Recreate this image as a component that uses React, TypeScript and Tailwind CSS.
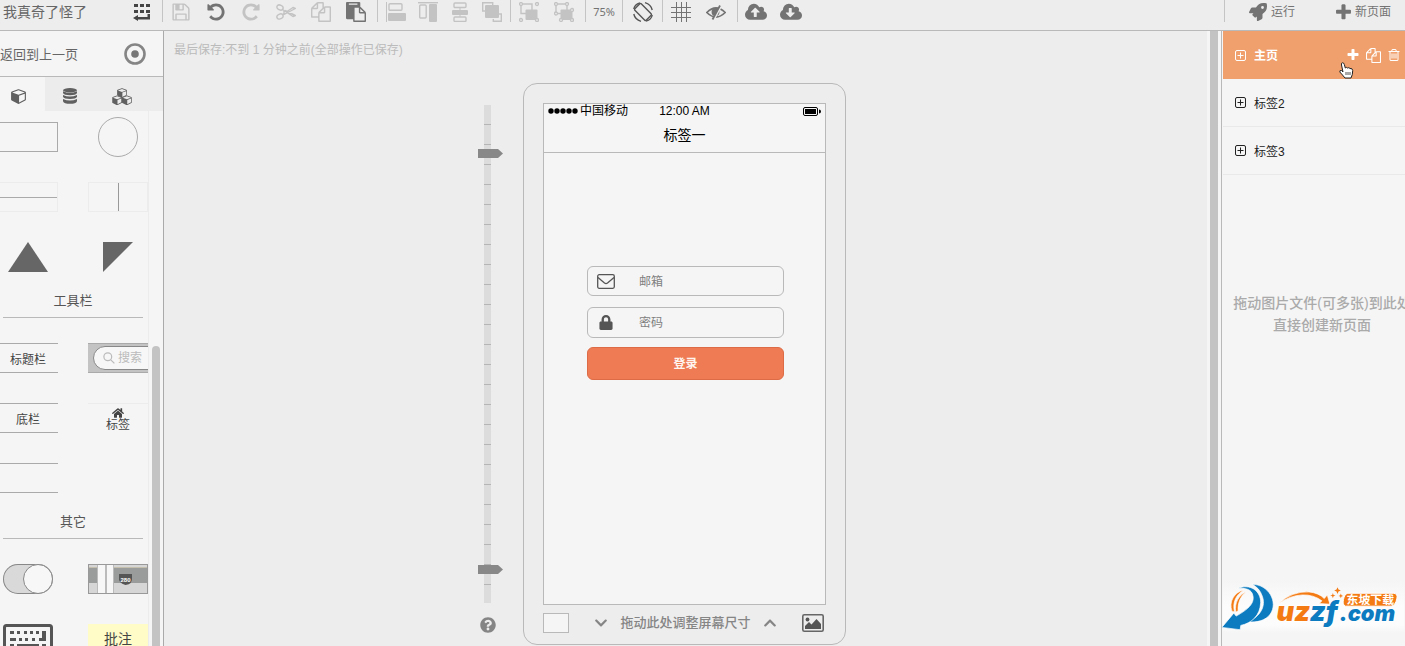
import type { ReactNode } from "react";
import {
  FaChevronDown,
  FaChevronUp,
  FaHome,
  FaLock,
  FaQuestionCircle,
  FaRocket,
} from "react-icons/fa";

const paths = {
  save: "M512 1536h768v-384h-768v384zm896 0h128v-896q0-14-10-38.5t-20-34.5l-281-281q-10-10-34-20t-39-10v416q0 40-28 68t-68 28h-576q-40 0-68-28t-28-68v-416h-128v1280h128v-416q0-40 28-68t68-28h832q40 0 68 28t28 68v416zm-384-928v-320q0-13-9.5-22.5t-22.5-9.5h-192q-13 0-22.5 9.5t-9.5 22.5v320q0 13 9.5 22.5t22.5 9.5h192q13 0 22.5-9.5t9.5-22.5zm640 32v928q0 40-28 68t-68 28h-1344q-40 0-68-28t-28-68v-1344q0-40 28-68t68-28h928q40 0 88 20t76 48l280 280q28 28 48 76t20 88z",
  undo: "M1664 896q0 156-61 298t-164 245-245 164-298 61q-172 0-327-72.5t-264-204.5q-7-10-6.5-22.5t8.5-20.5l137-138q10-9 25-9 16 2 23 12 73 95 179 147t225 52q104 0 198.5-40.5t163.5-109.5 109.5-163.5 40.5-198.5-40.5-198.5-109.5-163.5-163.5-109.5-198.5-40.5q-98 0-188 35.5t-160 101.5l137 138q31 30 14 69-17 40-59 40h-448q-26 0-45-19t-19-45v-448q0-42 40-59 39-17 69 14l130 129q107-101 244.5-156.5t284.5-55.5q156 0 298 61t245 164 164 245 61 298z",
  redo: "M1664 256v448q0 26-19 45t-45 19h-448q-42 0-59-40-17-39 14-69l138-138q-148-137-349-137-104 0-198.5 40.5t-163.5 109.5-109.5 163.5-40.5 198.5 40.5 198.5 109.5 163.5 163.5 109.5 198.5 40.5q119 0 225-52t179-147q7-10 23-12 15 0 25 9l137 138q9 8 9.5 20.5t-7.5 22.5q-109 132-264 204.5t-327 72.5q-156 0-298-61t-245-164-164-245-61-298 61-298 164-245 245-164 298-61q147 0 284.5 55.5t244.5 156.5l130-129q29-31 70-14 39 17 39 59z",
  copy: "M1696 384q40 0 68 28t28 68v1216q0 40-28 68t-68 28h-960q-40 0-68-28t-28-68v-288h-544q-40 0-68-28t-28-68v-672q0-40 20-88t48-76l408-408q28-28 76-48t88-20h416q40 0 68 28t28 68v328q68-40 128-40h416zm-544 213l-299 299h299v-299zm-640-384l-299 299h299v-299zm196 647l316-316v-416h-384v416q0 40-28 68t-68 28h-416v640h512v-256q0-40 20-88t48-76zm956 804v-1152h-384v416q0 40-28 68t-68 28h-416v640h896z",
  paste: "M768 1664h896v-640h-416q-40 0-68-28t-28-68v-416h-384v1152zm256-1440v-64q0-13-9.5-22.5t-22.5-9.5h-704q-13 0-22.5 9.5t-9.5 22.5v64q0 13 9.5 22.5t22.5 9.5h704q13 0 22.5-9.5t9.5-22.5zm256 672h299l-299-299v299zm512 128v672q0 40-28 68t-68 28h-960q-40 0-68-28t-28-68v-160h-544q-40 0-68-28t-28-68v-1344q0-40 28-68t68-28h1088q40 0 68 28t28 68v328q21 13 36 28l408 408q28 28 48 76t20 88z",
  plus: "M1600 736v192q0 40-28 68t-68 28h-416v416q0 40-28 68t-68 28h-192q-40 0-68-28t-28-68v-416h-416q-40 0-68-28t-28-68v-192q0-40 28-68t68-28h416v-416q0-40 28-68t68-28h192q40 0 68 28t28 68v416h416q40 0 68 28t28 68z",
  trash: "M704 736v576q0 14-9 23t-23 9h-64q-14 0-23-9t-9-23v-576q0-14 9-23t23-9h64q14 0 23 9t9 23zm256 0v576q0 14-9 23t-23 9h-64q-14 0-23-9t-9-23v-576q0-14 9-23t23-9h64q14 0 23 9t9 23zm256 0v576q0 14-9 23t-23 9h-64q-14 0-23-9t-9-23v-576q0-14 9-23t23-9h64q14 0 23 9t9 23zm128 724v-948h-896v948q0 22 7 40.5t14.5 27 10.5 8.5h832q3 0 10.5-8.5t14.5-27 7-40.5zm-672-1076h448l-48-117q-7-9-17-11h-317q-10 2-17 11zm928 32v64q0 14-9 23t-23 9h-96v948q0 83-47 143.5t-113 60.5h-832q-66 0-113-58.5t-47-141.5v-952h-96q-14 0-23-9t-9-23v-64q0-14 9-23t23-9h309l70-167q15-37 54-63t79-26h320q40 0 79 26t54 63l70 167h309q14 0 23 9t9 23z",
  cloud: "M1856 1152q0 159-112.5 271.5t-271.5 112.5h-1088q-185 0-316.5-131.5t-131.5-316.5q0-130 70-240t188-165q-2-30-2-43 0-212 150-362t362-150q156 0 285.5 87t188.5 231q71-62 166-62 106 0 181 75t75 181q0 76-41 138 130 31 213.5 135.5t83.5 238.5z",
  cube: "M896 1629l640-349v-636l-640 233v752zm-64-865l698-254-698-254-698 254zm832-252v768q0 35-18 65t-49 47l-704 384q-28 16-61 16t-61-16l-704-384q-31-17-49-47t-18-65v-768q0-40 23-73t61-47l704-256q22-8 44-8t44 8l704 256q38 14 61 47t23 73z",
};

type GlyphProps = { d: string; className: string };

function Glyph({ d, className }: GlyphProps) {
  return (
    <svg viewBox="0 0 1792 1792" fill="currentColor" className={className}>
      <path d={d} />
    </svg>
  );
}

function Cloud({ arrow }: { arrow: string }) {
  return (
    <svg viewBox="-64 0 1920 1792" className="h-[21px] w-[22px]">
      <path d={paths.cloud} fill="currentColor" />
      <path d={arrow} fill="#ededed" />
    </svg>
  );
}

function Line({ children, className = "size-5" }: { children: ReactNode; className?: string }) {
  return (
    <svg viewBox="0 0 20 20" fill="none" stroke="currentColor" className={className}>
      {children}
    </svg>
  );
}

type ToolProps = { label: string; children: ReactNode; className?: string };

function Tool({ label, children, className = "w-[35px] text-[#737373]" }: ToolProps) {
  return (
    <button
      type="button"
      aria-label={label}
      className={`flex h-6 shrink-0 items-center justify-center ${className}`}
    >
      {children}
    </button>
  );
}

function Sep() {
  return <div className="h-[22px] w-px shrink-0 bg-[#c4c4c4]" />;
}

const off = "w-[35px] text-[#c3c3c3]";
const offAlign = "w-8 text-[#c3c3c3]";

function Toolbar() {
  return (
    <header className="flex h-[31px] shrink-0 items-start border-b border-[#b9b9b9] bg-[#ededed] text-xs text-[#737373]">
      <div className="flex h-6 w-[162px] shrink-0 items-center justify-between pr-[11px] pl-[3px]">
        <span className="text-sm text-[#666]">我真奇了怪了</span>
        <button type="button" aria-label="菜单" className="text-[#444]">
          <svg viewBox="0 0 18 18" fill="currentColor" className="size-[18px]">
            <path d="M1 1h4v3H1zM7 1h4v3H7zM13 1h4v3h-4zM1 7h4v3H1zM7 7h4v3H7zM13 7h4v3h-4zM14.500 11H17v5.500H5V18l-5-3 5-3v2h9.500z" />
          </svg>
        </button>
      </div>
      <Sep />
      <div className="mr-1 flex">
        <Tool label="保存" className={off}>
          <Glyph d={paths.save} className="size-5" />
        </Tool>
        <Tool label="撤销">
          <Glyph d={paths.undo} className="size-5" />
        </Tool>
        <Tool label="重做" className={off}>
          <Glyph d={paths.redo} className="size-5" />
        </Tool>
        <Tool label="剪切" className={off}>
          <Line>
            <g strokeWidth="1.400">
              <ellipse cx="4" cy="5.500" rx="3.200" ry="2.400" transform="rotate(25 4 5.500)" />
              <ellipse cx="4" cy="14.500" rx="3.200" ry="2.400" transform="rotate(-25 4 14.500)" />
              <path
                d="M6.500 7.500 17 14.500l2.300-1L9 8.500M6.500 12.500 17 5.500l2.300 1L9 12l-2.500.5M8 8.500v3.500"
                strokeLinejoin="round"
              />
            </g>
          </Line>
        </Tool>
        <Tool label="复制" className={off}>
          <Glyph d={paths.copy} className="size-5" />
        </Tool>
        <Tool label="粘贴">
          <Glyph d={paths.paste} className="size-5" />
        </Tool>
      </div>
      <Sep />
      <div className="mx-0.5 flex">
        <Tool label="左对齐" className={offAlign}>
          <Line>
            <path d="M.5 0v20" />
            <rect x="3" y="1.700" width="13" height="6.500" rx="1" strokeWidth="1.400" />
            <rect x="2" y="11" width="18" height="8" rx="1" fill="currentColor" stroke="none" />
          </Line>
        </Tool>
        <Tool label="顶对齐" className={offAlign}>
          <Line>
            <path d="M0 .7h20" strokeWidth="1.400" />
            <rect x="1.700" y="3" width="6.500" height="13" rx="1" strokeWidth="1.400" />
            <rect x="11" y="2" width="8" height="18" rx="1" fill="currentColor" stroke="none" />
          </Line>
        </Tool>
        <Tool label="居中" className={offAlign}>
          <Line>
            <rect x="4" y="1" width="12" height="4.500" rx="1" strokeWidth="1.400" />
            <rect x="4" y="15" width="12" height="4.500" rx="1" strokeWidth="1.400" />
            <rect x="2" y="8" width="16" height="5" rx="1" fill="currentColor" stroke="none" />
            <path d="M10 5.500V15" />
          </Line>
        </Tool>
        <Tool label="层级" className={offAlign}>
          <Line>
            <path d="M3 9H.7V.7h10V3M17 12h2.300v7.300h-8V17" strokeWidth="1.400" />
            <rect x="3" y="3" width="14" height="13" rx="1" fill="currentColor" stroke="none" />
          </Line>
        </Tool>
      </div>
      <Sep />
      <div className="mr-1 flex">
        <Tool label="组合" className={off}>
          <Line>
            <path d="M7 11.500H2V2h11v6" strokeWidth="1.400" />
            <rect x="6.500" y="7.500" width="12" height="10.500" rx="1" fill="currentColor" stroke="none" />
            <g fill="#ededed" strokeWidth="1.300">
              <circle cx="2" cy="2" r="1.500" />
              <circle cx="18" cy="2" r="1.500" />
              <circle cx="2" cy="18" r="1.500" />
              <circle cx="18" cy="18" r="1.500" />
            </g>
          </Line>
        </Tool>
        <Tool label="取消组合" className={off}>
          <Line>
            <path d="M7 11.500H2V2h11v6" strokeWidth="1.400" />
            <rect x="6.500" y="7.500" width="12" height="10.500" rx="1" fill="currentColor" stroke="none" />
            <g fill="#ededed" strokeWidth="1.300">
              <circle cx="2" cy="2" r="1.500" />
              <circle cx="13" cy="2" r="1.500" />
              <circle cx="2" cy="11.500" r="1.500" />
              <circle cx="18" cy="8" r="1.500" />
              <circle cx="7" cy="18" r="1.500" />
              <circle cx="18" cy="18" r="1.500" />
            </g>
          </Line>
        </Tool>
      </div>
      <Sep />
      <button type="button" className="h-6 w-9 shrink-0 font-['Noto_Sans',sans-serif] text-[11px]">
        75%
      </button>
      <Sep />
      <Tool label="旋转" className="w-[39px] text-[#555]">
        <Line>
          <rect
            x="5.500"
            y="2"
            width="9"
            height="16"
            rx="1"
            strokeWidth="1.400"
            transform="rotate(-45 10 10)"
          />
          <path d="M.8 7Q1.500 2.500 7 .8M.8 12Q2 17.500 8 19.300M12 .7Q18 2.500 19.200 8M19.200 13Q18.500 17.500 13 19.200" strokeWidth="1.400" />
        </Line>
      </Tool>
      <Sep />
      <div className="mr-1 flex">
        <Tool label="网格">
          <Line>
            <path d="M5.500 0v20M10.500 0v20M15.500 0v20M0 5.500h20M0 10.500h20M0 15.500h20" />
          </Line>
        </Tool>
        <Tool label="隐藏">
          <Line>
            <path d="M.8 10.500Q10 1.500 19.200 10.500 10 19.500 .8 10.500z" strokeWidth="1.700" />
            <circle cx="9.500" cy="10" r="3.200" strokeWidth="1.500" fill="currentColor" />
            <path d="M15.200 4 7.700 18" stroke="#ededed" strokeWidth="1.800" />
            <path d="M14 3.500 6.500 17.500" strokeWidth="1.800" />
          </Line>
        </Tool>
      </div>
      <Sep />
      <Tool label="上传">
        <Cloud arrow="M1216 864q0-14-9-23l-352-352q-9-9-23-9t-23 9l-351 351q-10 12-10 24 0 14 9 23t23 9h224v352q0 13 9.500 22.500t22.500 9.500h192q13 0 22.500-9.500t9.500-22.500v-352h224q13 0 22.500-9.500t9.500-22.500z" />
      </Tool>
      <Tool label="下载">
        <Cloud arrow="M1216 928q0-14-9-23t-23-9h-224v-352q0-13-9.500-22.500t-22.500-9.500h-192q-13 0-22.500 9.500t-9.500 22.500v352h-224q-13 0-22.500 9.500t-9.500 22.500q0 14 9 23l352 352q9 9 23 9t23-9l351-351q10-12 10-24z" />
      </Tool>
      <div className="ml-auto flex">
        <Sep />
        <button type="button" className="ml-6 flex h-6 items-center gap-1">
          <FaRocket className="size-[18px]" />
          运行
        </button>
        <button type="button" className="mr-3.5 ml-[39px] flex h-6 items-center gap-0.5">
          <Glyph d={paths.plus} className="size-[19px]" />
          新页面
        </button>
      </div>
    </header>
  );
}

function Cubes() {
  return (
    <svg viewBox="0 0 3328 2900" fill="currentColor" className="h-[17px] w-5">
      <path d={paths.cube} transform="translate(832 -100)" />
      <path d={paths.cube} transform="translate(0 1150)" />
      <path d={paths.cube} transform="translate(1664 1150)" />
    </svg>
  );
}

function Heading({ children }: { children: string }) {
  return (
    <h2 className="mx-[3px] mt-1.5 mb-5 w-[140px] border-b border-[#b9b9b9] pt-0.5 text-center text-[13px] leading-8 text-[#555]">
      {children}
    </h2>
  );
}

// two cells per row, the left one is cut by the panel edge
function Row({ children }: { children: ReactNode }) {
  return <div className="grid h-10 grid-cols-[58px_60px] items-center gap-x-[30px]">{children}</div>;
}

function Keyboard() {
  return (
    <svg viewBox="0 0 50 30" className="ml-[3px] h-[30px] w-[50px]" fill="#555">
      <rect x="1.500" y="1.500" width="47" height="27" rx="2" fill="none" stroke="#555" strokeWidth="3" />
      <path d="M7 7h4v3H7zM14 7h3v3h-3zM21 7h3v3h-3zM27 7h3v3h-3zM33 7h3v3h-3zM39 7h4v10h-7v-3h3zM7 14h6v3H7zM16 14h3v3h-3zM22 14h3v3h-3zM29 14h3v3h-3zM7 20h4v3H7zM14 20h22v3H14zM39 20h4v3h-4z" />
    </svg>
  );
}

function MapThumb() {
  return (
    <svg viewBox="0 0 60 30" className="h-[30px] w-[60px]">
      <rect width="60" height="30" fill="#d6d6d6" />
      <rect y="4" width="60" height="15" fill="#999c9a" />
      <path d="M0 3.500h60" stroke="#c5bfae" />
      <rect x="9" width="17" height="30" fill="#bbb" />
      <rect x="10" width="7" height="30" fill="#f7f7f7" />
      <rect x="19" width="6" height="30" fill="#f7f7f7" />
      <path d="M31 10h13v3q1 7-6.500 8Q30 19 31 13z" fill="#555" />
      <text x="37.500" y="18" textAnchor="middle" fill="#fff" fontSize="6" fontWeight="bold">
        280
      </text>
      <rect x=".5" y=".5" width="59" height="29" fill="none" stroke="#999" />
    </svg>
  );
}

function Sidebar() {
  return (
    <aside className="flex w-[164px] shrink-0 flex-col border-r border-[#aaa] bg-[#f5f5f5] text-[#555]">
      <div className="flex h-[46px] shrink-0 items-center justify-between border-b border-[#b9b9b9] pr-[17px]">
        <a href="#back" className="pt-0.5 text-[13px] text-[#666]">
          返回到上一页
        </a>
        <button type="button" aria-label="定位">
          <svg viewBox="0 0 22 22" className="size-[22px]">
            <circle cx="11" cy="11" r="9.500" fill="none" stroke="#858585" strokeWidth="2.600" />
            <circle cx="11" cy="11" r="3.800" fill="#777" />
          </svg>
        </button>
      </div>
      <nav className="flex h-[34px] shrink-0 bg-[#ececec] text-[#606060]">
        <button
          type="button"
          aria-label="组件"
          className="flex w-[45px] items-center justify-center bg-[#f5f5f5] pt-1 pr-2"
        >
          <svg viewBox="0 0 1664 1792" fill="currentColor" className="h-4 w-[15px]">
            <path d={paths.cube} />
          </svg>
        </button>
        <button type="button" aria-label="数据" className="flex w-[50px] items-center justify-center pt-1">
          <svg viewBox="0 0 14 16" fill="currentColor" className="h-4 w-3.5">
            <ellipse cx="7" cy="2.200" rx="7" ry="2.200" />
            <path d="M0 3.300q7 3 14 0v1.700q-1 2.200-7 2.200T0 5zM0 7.100q7 3 14 0v1.700q-1 2.200-7 2.200T0 8.800zM0 10.900q7 3 14 0v2.300q-1 2.600-7 2.600t-7-2.600z" />
          </svg>
        </button>
        <button type="button" aria-label="模块" className="flex w-[54px] items-center justify-center pt-1">
          <Cubes />
        </button>
      </nav>
      <div className="flex min-h-0 flex-1 overflow-hidden">
        <div className="w-[149px] shrink-0 border-r border-[#ececec] pt-1.5">
          <div className="grid gap-5">
            <Row>
              <div className="h-[30px] border border-l-0 border-[#aaa]" />
              <div className="mx-auto size-10 rounded-full border border-[#aaa]" />
            </Row>
            <Row>
              <div className="flex h-[30px] items-center border border-l-0 border-[#ececec]">
                <div className="h-px w-full bg-[#aaa]" />
              </div>
              <div className="flex h-[30px] justify-center border border-[#ececec]">
                <div className="h-full w-px bg-[#999]" />
              </div>
            </Row>
            <Row>
              <svg viewBox="0 0 40 30" className="ml-2 h-[30px] w-10" fill="#666">
                <path d="M20 0l20 30H0z" />
              </svg>
              <svg viewBox="0 0 30 30" className="ml-[15px] size-[30px]" fill="#666">
                <path d="M0 0h30L0 30z" />
              </svg>
            </Row>
          </div>
          <Heading>工具栏</Heading>
          <div className="grid gap-5 text-xs text-[#444]">
            <Row>
              <div className="h-[30px] border-y border-[#aaa] pt-0.5 pr-0.5 text-center leading-7">
                标题栏
              </div>
              <div className="h-[30px] overflow-hidden border-y border-[#aaa] bg-[#c3c3c3] py-0.5 pl-[5px]">
                <div className="flex h-6 w-20 items-center gap-[3px] rounded-full border border-[#888] bg-[#f7f7f7] pl-[9px] text-[#bbb]">
                  <Line className="size-3">
                    <circle cx="8" cy="8" r="6.500" strokeWidth="2" />
                    <path d="M13 13l6 6" strokeWidth="2" />
                  </Line>
                  搜索
                </div>
              </div>
            </Row>
            <Row>
              <div className="h-[30px] border-y border-[#aaa] pt-0.5 pr-0.5 text-center leading-7">
                底栏
              </div>
              <div className="flex h-[30px] flex-col items-center border-t border-[#ececec] pt-[3px] leading-3">
                <FaHome className="size-3 shrink-0" />
                标签
              </div>
            </Row>
            <Row>
              <div className="h-[30px] border-y border-[#aaa]" />
            </Row>
          </div>
          <Heading>其它</Heading>
          <div className="grid gap-5">
            <Row>
              <div className="ml-[3px] flex h-[30px] w-[50px] justify-end rounded-full bg-[#d9d9d9] ring-1 ring-[#888] ring-inset">
                <div className="size-[30px] rounded-full border border-[#888] bg-[#f7f7f7]" />
              </div>
              <MapThumb />
            </Row>
            <Row>
              <Keyboard />
              <div className="h-[30px] bg-[#fffcc8] text-center text-sm leading-[30px] text-[#444]">批注</div>
            </Row>
          </div>
        </div>
        <div className="mt-[235px] ml-[3px] w-2 rounded-t-full bg-[#c3c3c3]" />
      </div>
    </aside>
  );
}

function Thumb({ className }: { className: string }) {
  return (
    <svg viewBox="0 0 25 9" fill="#888" className={`absolute -left-1.5 h-[9px] w-[25px] ${className}`}>
      <path d="M0 0h20l5 4.500L20 9H0z" />
    </svg>
  );
}

function Ruler() {
  return (
    <div className="mr-8 flex w-[7px] flex-col items-center justify-self-end pt-[22px]">
      <div className="relative h-[498px] w-[7px] bg-[#dcdcdc]">
        {Array.from({ length: 24 }, (_, i) => (
          <div key={i} className="h-5 border-b border-[#b5b5b5]" />
        ))}
        <Thumb className="top-11" />
        <Thumb className="top-[460px]" />
      </div>
      <button type="button" aria-label="帮助" className="mt-3.5 text-[#858585]">
        <FaQuestionCircle className="size-4" />
      </button>
    </div>
  );
}

function Phone() {
  return (
    <div className="w-[323px] rounded-[14px] border border-[#b9b9b9] px-[19px] pt-[19px]">
      <div className="h-[502px] border border-[#b9b9b9] bg-[#f5f5f5]">
        <div className="h-[49px] border-b border-[#b9b9b9] text-black">
          <div className="grid h-3.5 grid-cols-[1fr_auto_1fr] items-center px-1 text-xs leading-3">
            <div className="flex items-center gap-0.5">
              <svg viewBox="0 0 30 6" className="h-1.5 w-[30px]">
                <circle cx="3" cy="3" r="2.700" />
                <circle cx="9" cy="3" r="2.700" />
                <circle cx="15" cy="3" r="2.700" />
                <circle cx="21" cy="3" r="2.700" />
                <circle cx="27" cy="3" r="2.700" />
              </svg>
              中国移动
            </div>
            <span>12:00 AM</span>
            <svg viewBox="0 0 18 9" className="h-[9px] w-[18px] justify-self-end">
              <rect x=".5" y=".5" width="14" height="8" rx="1.500" fill="none" stroke="#000" />
              <path d="M2 2h11v5H2zM16 2.500q2 0 2 2t-2 2z" />
            </svg>
          </div>
          <h1 className="text-center text-sm leading-[34px]">标签一</h1>
        </div>
        <form className="mt-[113px] ml-[43px] w-[197px]" onSubmit={(e) => e.preventDefault()}>
          <label className="flex h-[30px] items-center rounded-md border border-[#b9b9b9] pl-[9px]">
            <svg
              viewBox="0 0 18 15"
              fill="none"
              stroke="#555"
              strokeWidth="1.300"
              className="h-[15px] w-[18px] shrink-0"
            >
              <rect x=".7" y=".7" width="16.600" height="13.600" rx="1.500" />
              <path d="M1 3.500l6.500 5.500q1.500 1.200 3 0L17 3.500" />
            </svg>
            <input
              type="text"
              aria-label="邮箱"
              placeholder="邮箱"
              className="ml-6 w-32 pt-0.5 text-xs outline-none placeholder:text-[#808080]"
            />
          </label>
          <label className="mt-[11px] flex h-[31px] items-center rounded-md border border-[#b9b9b9] pl-[9px]">
            <FaLock className="h-[15px] w-[18px] shrink-0 text-[#555]" />
            <input
              type="password"
              aria-label="密码"
              placeholder="密码"
              className="ml-6 w-32 text-xs outline-none placeholder:text-[#808080]"
            />
          </label>
          <button
            type="submit"
            className="mt-[9px] h-[33px] w-full rounded-md border border-[#dd6b45] bg-[#ee7b53] text-xs font-bold text-[#fff4ee]"
          >
            登录
          </button>
        </form>
      </div>
      <div className="flex h-[39px] items-center justify-between pr-0.5 pb-1 text-[13px] font-medium text-[#858585]">
        <button
          type="button"
          aria-label="背景颜色"
          className="h-5 w-[26px] border border-[#b9b9b9] bg-[#f5f5f5]"
        />
        <div className="flex items-center gap-3">
          <FaChevronDown className="size-3.5" />
          拖动此处调整屏幕尺寸
          <FaChevronUp className="size-3.5" />
        </div>
        <button type="button" aria-label="背景图片">
          <svg viewBox="0 0 22 18" className="h-[18px] w-[22px]">
            <rect x=".8" y=".8" width="20.400" height="16.400" rx="1.500" fill="none" stroke="#666" strokeWidth="1.600" />
            <circle cx="5.500" cy="5.500" r="1.900" fill="#555" />
            <path d="M3 15v-3l4-4 2.500 2.500L14.500 5 19 10v5z" fill="#555" />
          </svg>
        </button>
      </div>
    </div>
  );
}

function Expand() {
  return (
    <svg viewBox="0 0 11 11" fill="none" stroke="currentColor" className="size-[11px]">
      <rect x=".5" y=".5" width="10" height="10" rx="1.500" />
      <path d="M5.500 2.500v6M2.500 5.500h6" />
    </svg>
  );
}

function Logo() {
  return (
    <svg
      viewBox="18 15 552 160"
      className="pointer-events-none absolute right-0 bottom-[13px] h-[53px] w-[184px]"
    >
      <defs>
        <linearGradient id="glow" x1="0" y1="0" x2="0" y2="1">
          <stop offset="0" stopColor="#f5f5f5" />
          <stop offset=".5" stopColor="#fcfcfc" />
          <stop offset=".85" stopColor="#fcfcfc" />
          <stop offset="1" stopColor="#f5f5f5" />
        </linearGradient>
      </defs>
      <rect x="21" y="15" width="549" height="160" fill="url(#glow)" />
      <g stroke="#fff" strokeWidth="2">
        <path
          d="M110 28C160 28 190 82 165 118 152 137 125 144 98 141 136 124 152 94 141 64 135 47 126 36 110 28z"
          fill="#0c7bc0"
        />
        <path
          d="M66 41C104 24 137 48 136 84 134 122 110 145 76 152L74 165 19 158 55 115 62 124C98 104 117 86 113 64 110 42 88 38 66 41z"
          fill="#0c7bc0"
        />
        <path d="M86 45C58 50 38 80 50 110L57 111C50 82 62 58 86 45z" fill="#f47b14" />
        <path d="M94 50C70 60 56 84 61 112L68 108C66 84 76 62 94 50z" fill="#f47b14" />
        <path
          d="M190 86Q232 48 282 51 312 54 328 71L337 60 345 88 313 86 321 78Q296 59 262 60 224 62 190 86z"
          fill="#f47b14"
        />
      </g>
      <g
        fontFamily="Inter, 'Liberation Sans', sans-serif"
        fontStyle="italic"
        fontWeight="900"
        fontSize="82"
        stroke="#fff"
        strokeWidth="4"
        paintOrder="stroke"
      >
        <text x="184" y="139" fill="#f47b14">
          uz
        </text>
        <text x="284" y="139" fill="#0c7bc0">
          zf
        </text>
        <text x="374" y="139" fill="#0c7bc0" fontSize="66">
          .com
        </text>
      </g>
      <path
        d="M399 55H538Q551 57 547 72 543 92 530 94H392Q382 90 386 74 389 57 399 55z"
        fill="#f47b14"
        stroke="#fff"
        strokeWidth="3"
      />
      <text x="467" y="88" textAnchor="middle" fill="#fff" fontSize="36" fontWeight="bold">
        东坡下载
      </text>
      <path
        d="M368 37l3 7 7 3-7 3-3 7-3-7-7-3 7-3zM354 54l2 6 6 2-6 2-2 6-2-6-6-2 6-2zM378 56l2 5 5 2-5 2-2 5-2-5-5-2 5-2z"
        fill="#f47b14"
      />
    </svg>
  );
}

function Pages() {
  return (
    <aside className="relative w-[184px] shrink-0 overflow-hidden border-l border-[#b9b9b9] bg-[#f5f5f5] pl-px">
      <ul className="text-xs text-[#222]">
        <li className="relative flex h-12 items-center gap-2 bg-[#f0a06c] pr-1 pl-3 font-bold text-white">
          <Expand />
          <span className="pt-0.5">主页</span>
          <div className="ml-auto flex items-center gap-1.5">
            <button type="button" aria-label="添加">
              <Glyph d={paths.plus} className="size-3.5" />
            </button>
            <button type="button" aria-label="复制页面">
              <Glyph d={paths.copy} className="size-[15px]" />
            </button>
            <button type="button" aria-label="删除">
              <Glyph d={paths.trash} className="size-3.5" />
            </button>
          </div>
          <svg viewBox="0 0 15 17" className="absolute top-[31px] left-[116px] z-10 h-[17px] w-[15px]">
            <path
              d="M4 10L2.500 3Q2 .8 3.500.8T5.300 2.500L6.300 6Q7.500 4.800 8.500 6 10 5 11 6.500 13.500 6 13.700 8.500L13.300 12.500 12 16H6L3.500 13 .8 10Q.5 8 2.500 8.500z"
              fill="#fff"
              stroke="#222"
            />
            <path d="M7 10v3M9 10v3M11 10v3" stroke="#222" strokeWidth=".8" />
          </svg>
        </li>
        {["标签2", "标签3"].map((name) => (
          <li key={name} className="flex h-12 items-center gap-2 border-b border-[#e9e9e9] pl-3">
            <Expand />
            <span className="pt-0.5">{name}</span>
          </li>
        ))}
      </ul>
      <p className="mt-[117px] w-[198px] text-center text-sm leading-[22px] font-medium whitespace-nowrap text-[#aaa]">
        拖动图片文件(可多张)到此处
        <br />
        直接创建新页面
      </p>
      <Logo />
    </aside>
  );
}

export default function App() {
  return (
    <div className="flex h-screen flex-col overflow-hidden bg-[#ededed] font-['Liberation_Sans','Noto_Sans_CJK_SC',sans-serif]">
      <Toolbar />
      <div className="flex min-h-0 flex-1">
        <Sidebar />
        <main className="flex min-w-0 flex-1 flex-col">
          <p className="h-[52px] shrink-0 pt-[11px] pl-2.5 text-xs text-[#bbb]">
            最后保存:不到 1 分钟之前(全部操作已保存)
          </p>
          <div className="grid grid-cols-[1fr_auto_1fr] items-start pr-0.5">
            <Ruler />
            <Phone />
          </div>
        </main>
        <div className="w-3.5 shrink-0 bg-[#f5f5f5] px-[3px]">
          <div className="h-full bg-[#c3c3c3]" />
        </div>
        <Pages />
      </div>
    </div>
  );
}
